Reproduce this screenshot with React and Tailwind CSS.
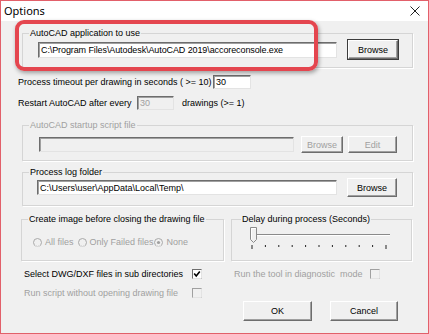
import React from 'react';

const font = { fontFamily: '"Liberation Sans", Arial, sans-serif' };

const Btn = ({ children, disabled, primary, className = '' }) => (
    <div
        className={`flex items-center justify-center bg-[#f0f0f0] border border-t-white border-l-white border-r-[#6d6d6d] border-b-[#6d6d6d] shadow-[inset_-1px_-1px_0_#a0a0a0] ${primary ? 'outline outline-1 outline-[#3c3c3c]' : ''} ${disabled ? 'text-[#a0a0a0]' : 'text-black'} ${className}`}
    >
        {children}
    </div>
);

const Field = ({ value, disabled, className = '' }) => (
    <div
        className={`flex items-center pl-[2px] overflow-hidden whitespace-nowrap border border-t-[#6d6d6d] border-l-[#6d6d6d] border-r-[#e3e3e3] border-b-[#e3e3e3] shadow-[inset_1px_1px_0_#a0a0a0] ${disabled ? 'bg-[#f0f0f0] text-[#a0a0a0]' : 'bg-white text-black'} ${className}`}
    >
        {value}
    </div>
);

// legend sits inside the padding box, so its margin cancels the fieldset padding
const Group = ({ title, disabled, className = '', legendClass = '', children }) => (
    <fieldset className={`border border-[#d5d5d5] shadow-[1px_1px_0_#ffffff] ${className}`}>
        <legend className={`px-[1px] leading-[12px] whitespace-nowrap ${disabled ? 'text-[#a0a0a0]' : 'text-black'} ${legendClass}`}>{title}</legend>
        {children}
    </fieldset>
);

const Check = ({ checked, disabled }) => (
    <svg width="10" height="10" viewBox="0 0 10 10" className="shrink-0">
        <rect x="0.5" y="0.5" width="9" height="9" fill={disabled ? '#f0f0f0' : '#ffffff'} stroke={disabled ? '#a0a0a0' : '#6d6d6d'} />
        <path d="M0.5 9.5 H9.5 V0.5" fill="none" stroke="#e3e3e3" />
        {checked && <path d="M2.2 4.6 L4.2 7 L7.8 2.4" fill="none" stroke="#000" strokeWidth="1.6" />}
    </svg>
);

const Radio = ({ checked }) => (
    <svg width="9" height="9" viewBox="0 0 9 9" className="shrink-0">
        <circle cx="4.5" cy="4.5" r="4" fill="#f0f0f0" stroke="#a8a8a8" />
        <path d="M1.7 7.3 A4 4 0 0 0 7.3 7.3" fill="none" stroke="#e8e8e8" />
        {checked && <circle cx="4.5" cy="4.5" r="1.6" fill="#a0a0a0" />}
    </svg>
);

const Slider = () => {
    const ticks = Array.from({ length: 11 }, (_, i) => 4 + i * 13.4);
    return (
        <svg width="150" height="24" viewBox="0 0 150 24">
            <line x1="6" y1="7.5" x2="142" y2="7.5" stroke="#8a8a8a" />
            <line x1="6" y1="8.5" x2="142" y2="8.5" stroke="#ffffff" />
            <path d="M2.5 0.5 H8.5 V12.5 L5.5 15.5 L2.5 12.5 Z" fill="#f0f0f0" stroke="#8a8a8a" />
            <path d="M3.5 12 V1.5 H8" fill="none" stroke="#ffffff" />
            {ticks.map((x, i) => (
                <line key={i} x1={x} y1={18} x2={x} y2={i === 0 || i === 10 ? 22 : 20} stroke="#222" />
            ))}
        </svg>
    );
};

export default function App() {
    return (
        <div style={font} className="relative w-[429px] h-[334px] border border-[#e2606a] bg-[#f0f0f0] text-[9px] leading-[12px] text-black overflow-hidden whitespace-nowrap">
            {/* title bar */}
            <div className="flex items-center justify-between h-[20px] bg-white pl-[3px] pr-[8px]">
                <span className="text-[11px] text-black" style={{ fontFamily: '"Noto Sans", "Liberation Sans", sans-serif' }}>Options</span>
                <svg width="10" height="10" viewBox="0 0 10 10">
                    <path d="M0.5 0.5 L9.5 9.5 M9.5 0.5 L0.5 9.5" stroke="#222" strokeWidth="1" />
                </svg>
            </div>

            <div className="flex flex-col">
                <Group title="AutoCAD application to use" legendClass="-ml-[9px]" className="ml-[21px] mt-[6px] w-[391px] pl-[15px] pt-[1px] pb-[8px]">
                    <div className="flex items-center">
                        <Field value="C:\Program Files\Autodesk\AutoCAD 2019\accoreconsole.exe" className="w-[299px] h-[16px] tracking-[-0.1px]" />
                        <Btn primary className="ml-[11px] w-[50px] h-[19px]">Browse</Btn>
                    </div>
                </Group>

                <div className="flex items-center ml-[17px] mt-[7px] h-[14px]">
                    <span className="w-[195px]">Process timeout per drawing in seconds ( &gt;= 10)</span>
                    <Field value="30" className="w-[38px] h-[14px]" />
                </div>

                <div className="flex items-center ml-[17px] mt-[7px] h-[14px]">
                    <span className="w-[119px]">Restart AutoCAD after every</span>
                    <Field value="30" disabled className="w-[37px] h-[14px]" />
                    <span className="ml-[8px]">drawings (&gt;= 1)</span>
                </div>

                <Group title="AutoCAD startup script file" disabled legendClass="-ml-[10px]" className="ml-[21px] mt-[9px] w-[391px] pl-[16px] pt-[5px] pb-[7px]">
                    <div className="flex items-center h-[17px]">
                        <Field value="" disabled className="w-[255px] h-[15px]" />
                        <Btn disabled className="ml-[7px] w-[42px] h-[17px]">Browse</Btn>
                        <Btn disabled className="ml-[5px] w-[49px] h-[17px]">Edit</Btn>
                    </div>
                </Group>

                <Group title="Process log folder" legendClass="-ml-[8px]" className="ml-[21px] mt-[5px] w-[391px] pl-[14px] pt-0 pb-[8px]">
                    <div className="flex items-center h-[19px]">
                        <Field value="C:\Users\user\AppData\Local\Temp\" className="w-[300px] h-[15px]" />
                        <Btn className="ml-[10px] w-[50px] h-[19px]">Browse</Btn>
                    </div>
                </Group>

                <div className="flex mt-[7px] ml-[20px]">
                    <Group title="Create image before closing the drawing file" legendClass="-ml-[5px]" className="w-[203px] h-[48px] pl-[11px] pt-[11px]">
                        <div className="flex items-center h-[12px] text-[#a0a0a0]">
                            <Radio />
                            <span className="ml-[3px]">All files</span>
                            <span className="ml-[4px] flex"><Radio /></span>
                            <span className="ml-[3px]">Only Failed files</span>
                            <Radio checked />
                            <span className="ml-[4px]">None</span>
                        </div>
                    </Group>
                    <Group title="Delay during process (Seconds)" legendClass="-ml-[7px]" className="ml-[7px] w-[181px] h-[48px] pl-[16px] pt-[2px]">
                        <Slider />
                    </Group>
                </div>

                <div className="flex">
                    <div className="flex flex-col ml-[23px] w-[200px]">
                        <div className="flex items-center mt-[6px] h-[13px]">
                            <span className="w-[168px]">Select DWG/DXF files in sub directories</span>
                            <Check checked />
                        </div>
                        <div className="flex items-center mt-[6px] h-[13px] text-[#a0a0a0]">
                            <span className="w-[168px]">Run script without opening drawing file</span>
                            <Check disabled />
                        </div>
                    </div>
                    <div className="flex flex-col ml-[10px]">
                        <div className="flex items-center mt-[6px] h-[13px] text-[#a0a0a0]">
                            <span className="w-[136px]">Run the tool in diagnostic&nbsp; mode</span>
                            <Check disabled />
                        </div>
                        <div className="flex mt-[21px] ml-[9px]">
                            <Btn className="w-[69px] h-[20px]">OK</Btn>
                            <Btn className="ml-[18px] w-[68px] h-[20px]">Cancel</Btn>
                        </div>
                    </div>
                </div>
            </div>

            {/* red annotation highlight */}
            <div className="absolute left-[14px] top-[19px] w-[303px] h-[51px] rounded-[9px] border-[4px] border-[#e4464f] shadow-[1px_2px_4px_rgba(0,0,0,0.35)]" />
        </div>
    );
}
